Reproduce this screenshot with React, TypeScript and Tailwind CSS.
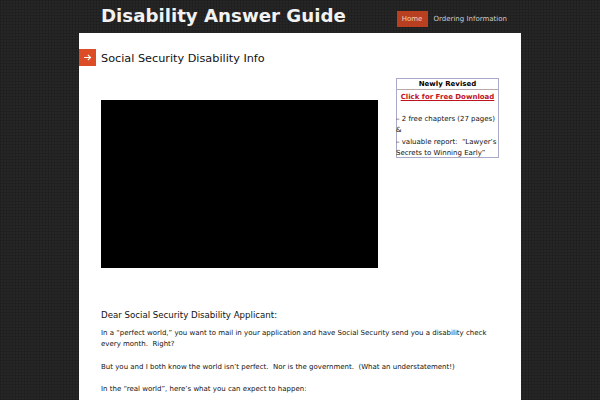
const dejavu = "font-['DejaVu_Sans',sans-serif]";

function SideBox() {
  return (
    <div className="h-[80px] w-[103px] shrink-0 border border-[#a9a9c9] text-[7px] leading-[11.3px] text-[#111]">
      <div className="h-[11px] border-b border-[#b9a9a9] text-center font-bold leading-[10.5px] text-black">
        Newly Revised
      </div>
      <div className="mt-[1.5px] text-center font-bold underline text-[#c1121f]">
        Click for Free Download
      </div>
      <div className="-ml-px mt-[11.3px] whitespace-nowrap">
        – 2 free chapters (27 pages)
        <br />
        &amp;
        <br />– valuable report:&nbsp; “Lawyer’s
        <br />
        Secrets to Winning Early”
      </div>
    </div>
  );
}

export default function App() {
  return (
    <div
      className={`${dejavu} h-[400px] w-[600px] overflow-hidden bg-[#262626] bg-[repeating-linear-gradient(0deg,rgba(0,0,0,0.12)_0px,rgba(0,0,0,0.12)_1px,transparent_1px,transparent_3px),repeating-linear-gradient(90deg,rgba(0,0,0,0.12)_0px,rgba(0,0,0,0.12)_1px,transparent_1px,transparent_3px)]`}
    >
      <header className="mx-auto flex h-[33px] w-[442px] items-center justify-between">
        <h1 className="pl-[22px] pb-[1px] text-[18.2px] font-bold text-[#f2f2f2]">
          Disability Answer Guide
        </h1>
        <nav className="flex items-center pt-[5px] pr-[14px] text-[7px] text-[#cccccc]">
          <a className="flex h-[16px] w-[31px] items-center justify-center bg-[#b83f1f] text-[#f0d0c0]">
            Home
          </a>
          <a className="ml-[6px]">Ordering Information</a>
        </nav>
      </header>

      <main className="mx-auto h-[367px] w-[442px] bg-white">
        <div className="flex items-center pt-[16px]">
          <div className="flex h-[17px] w-[17px] items-center justify-center bg-[#dc4c26]">
            <svg width="9" height="9" viewBox="0 0 24 24" fill="none" stroke="#fff" strokeWidth="3">
              <path d="M3 12h17M13 5l7 7-7 7" />
            </svg>
          </div>
          <h2 className="ml-[5px] pt-[1px] text-[11.25px] leading-[15px] text-[#111]">Social Security Disability Info</h2>
        </div>

        <div className="flex pl-[22px] pt-[12px]">
          <div className="mt-[22px] h-[168px] w-[277px] bg-black" />
          <div className="ml-[18px]">
            <SideBox />
          </div>
        </div>

        <div className="pl-[22px] pt-[41px] text-[#111]">
          <h3 className="text-[8.65px] leading-[13px]">Dear Social Security Disability Applicant:</h3>
          <div className="mt-[6px] whitespace-nowrap text-[7px] leading-[11.3px]">
            <p>
              In a “perfect world,” you want to mail in your application and have Social Security send you a disability check
              <br />
              every month.&nbsp; Right?
            </p>
            <p className="mt-[11.3px]">
              But you and I both know the world isn’t perfect.&nbsp; Nor is the government.&nbsp; (What an understatement!)
            </p>
            <p className="mt-[11.3px]">In the “real world”, here’s what you can expect to happen:</p>
          </div>
        </div>
      </main>
    </div>
  );
}
